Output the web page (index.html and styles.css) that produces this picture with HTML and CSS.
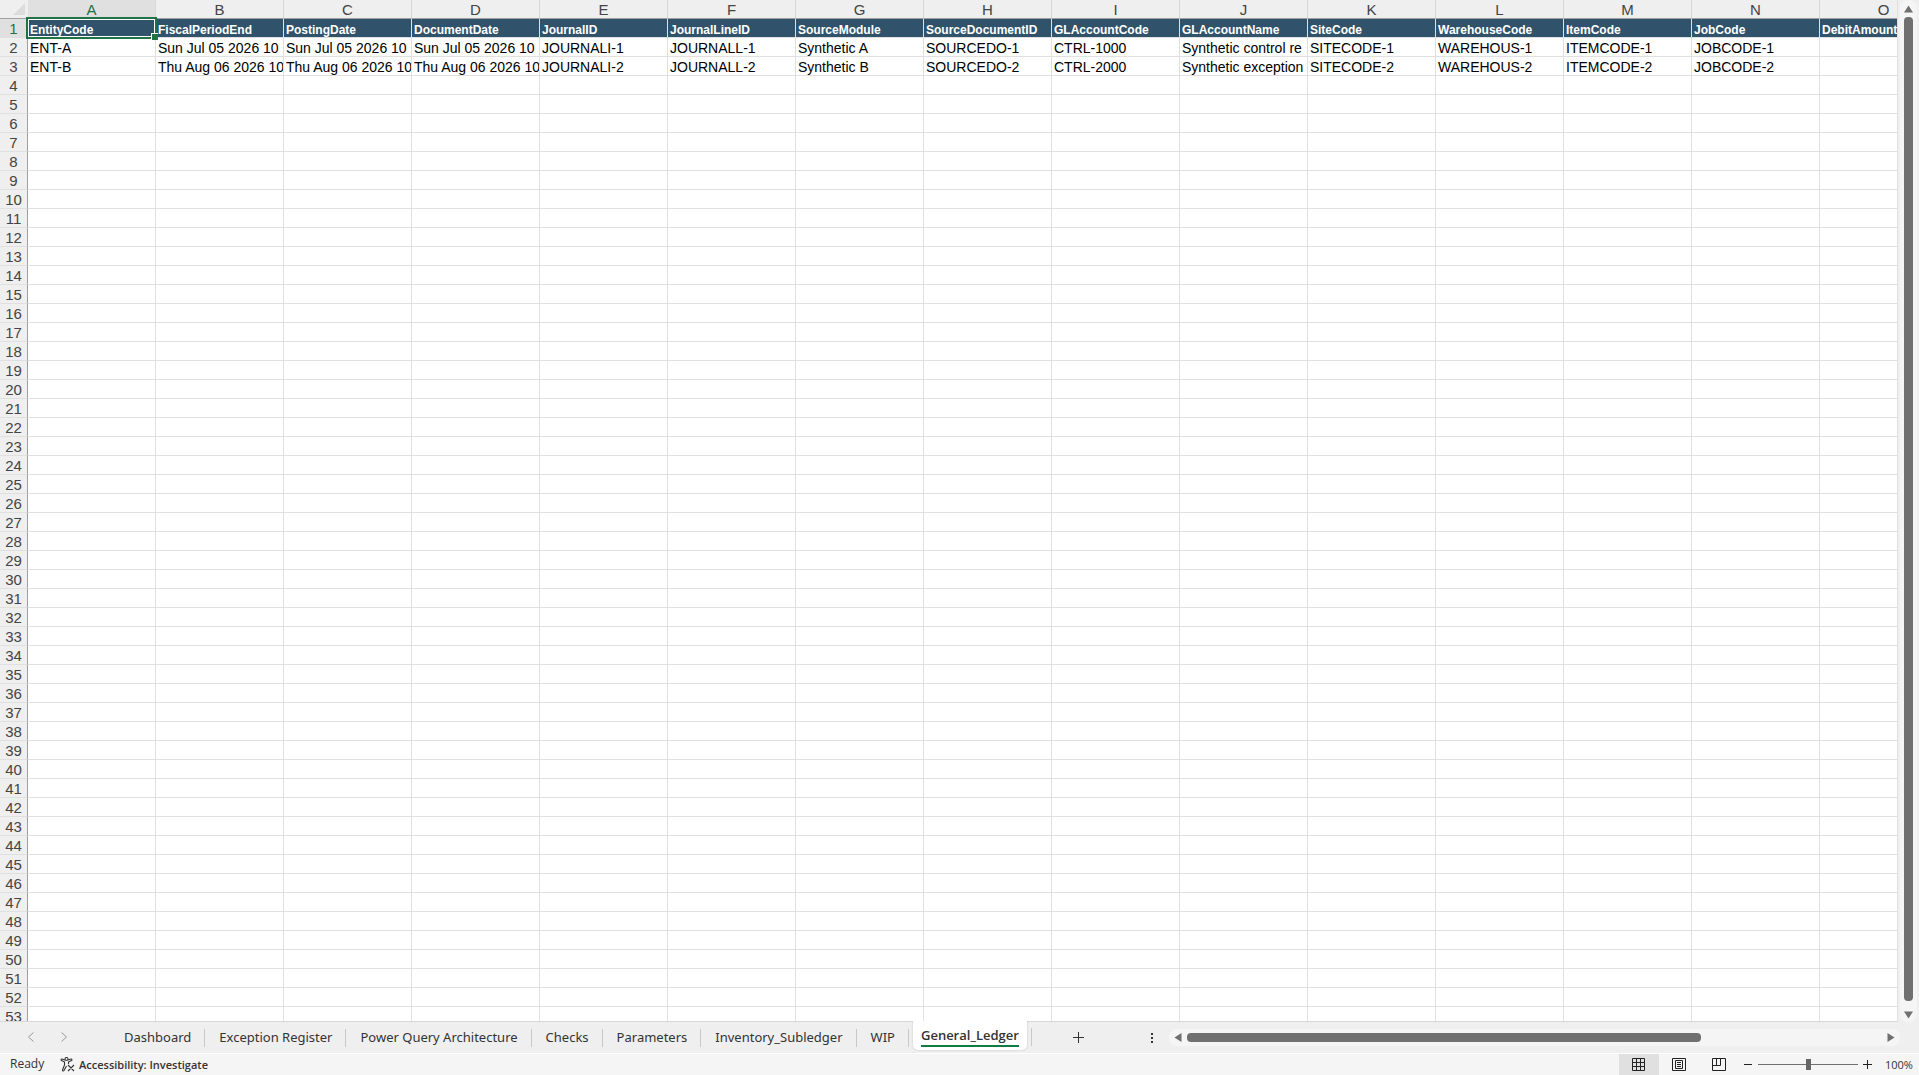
FILE: index.html
```html
<!DOCTYPE html>
<html lang="en">
<head>
  <meta charset="UTF-8">
  <meta name="viewport" content="width=device-width, initial-scale=1.0">
  <title>General_Ledger</title>
  <link rel="stylesheet" href="styles.css">
</head>
<body>
  <div class="workbook">
    <!-- Grid + vertical scrollbar -->
    <div class="main">
      <div class="sheet">
        <table class="grid">
          <thead>
            <tr id="letters"><th class="corner"><svg width="12" height="12" viewBox="0 0 12 12"><path d="M12 0v12H0z" fill="#dcdcdc"/></svg></th></tr>
          </thead>
          <tbody id="rows"></tbody>
        </table>
      </div>
      <div class="vscroll">
        <svg width="9" height="8" viewBox="0 0 9 8"><path d="M4.500 0.500L9 7.500H0z" fill="#707070"/></svg>
        <div class="vthumb"></div>
        <svg width="9" height="8" viewBox="0 0 9 8"><path d="M0 0.500h9L4.500 7.500z" fill="#707070"/></svg>
      </div>
    </div>

    <!-- Sheet tabs -->
    <div class="tabbar">
      <div class="tab-nav">
        <button aria-label="Previous sheet"><svg width="8" height="12" viewBox="0 0 8 12"><path d="M6.500 1.500L1.500 6l5 4.500"/></svg></button>
        <button aria-label="Next sheet"><svg width="8" height="12" viewBox="0 0 8 12"><path d="M1.500 1.500l5 4.500-5 4.500"/></svg></button>
      </div>
      <div class="tabs">
        <button class="tab">Dashboard</button>
        <button class="tab">Exception Register</button>
        <button class="tab">Power Query Architecture</button>
        <button class="tab">Checks</button>
        <button class="tab">Parameters</button>
        <button class="tab">Inventory_Subledger</button>
        <button class="tab">WIP</button>
        <button class="tab active"><span>General_Ledger</span></button>
      </div>
      <button class="add" aria-label="New sheet"><svg width="12" height="12" viewBox="0 0 12 12"><path d="M5.500 0v11M0 5.500h11" stroke="#333"/></svg></button>
      <div class="right">
        <svg class="dots" width="2" height="10" viewBox="0 0 2 10"><path d="M0 0h2v2H0zM0 4h2v2H0zM0 8h2v2H0z" fill="#333"/></svg>
        <div class="hscroll">
          <svg width="8" height="9" viewBox="0 0 8 9"><path d="M7.500 0v9L0.500 4.500z" fill="#707070"/></svg>
          <div class="htrack"><div class="hthumb"></div></div>
          <svg width="8" height="9" viewBox="0 0 8 9"><path d="M0.500 0v9l7-4.500z" fill="#707070"/></svg>
        </div>
      </div>
    </div>

    <!-- Status bar -->
    <div class="status">
      <span class="ready">Ready</span>
      <button class="access">
        <svg width="15" height="15" viewBox="0 0 15 15" fill="none" stroke="#333" stroke-width="1.100"><circle cx="6.500" cy="2" r="1.500"/><path d="M5 3L2 2C1 1.800 .7 3.200 1.500 3.500L4.500 5v3L2.500 13c-.2 1 1 1.300 1.500.5L6.500 9M8 3l3-1c1-.2 1.300 1.200.5 1.500L8.500 5v2M8 8l6 6M14 8l-6 6"/></svg>
        Accessibility: Investigate
      </button>
      <div class="views">
        <button class="view on" aria-label="Normal"><svg width="14" height="14" viewBox="0 0 14 14"><path d="M.5.5h12v12H.5zM4.500.5v12M8.500.5v12M.5 4.500h12M.5 8.500h12"/></svg></button>
        <button class="view" aria-label="Page Layout"><svg width="14" height="14" viewBox="0 0 14 14"><path d="M.5.5h13v12H.5zM3.500 2.500h7v8h-7zM5 4.500h4M5 6.500h4M5 8.500h4"/></svg></button>
        <button class="view" aria-label="Page Break Preview"><svg width="14" height="14" viewBox="0 0 14 14"><path d="M.5.5h13v12H.5zM.5 7.500h8v-7M4.500.5v7"/></svg></button>
      </div>
      <div class="zoom">
        <button aria-label="Zoom out"><svg width="9" height="9" viewBox="0 0 9 9"><path d="M0 4.500h8"/></svg></button>
        <input type="range" min="0" max="100" value="50" aria-label="Zoom">
        <button aria-label="Zoom in"><svg width="9" height="9" viewBox="0 0 9 9"><path d="M0 4.500h9M4.500 0v9"/></svg></button>
        <span class="percent">100%</span>
      </div>
    </div>
  </div>
  <script src="script.js"></script>
</body>
</html>
```

FILE: styles.css
```css
* {
  box-sizing: border-box;
}

body {
  margin: 0;
  background: #efefef;
  color: #333;
  font-family: "Open Sans", "Noto Sans", sans-serif;
}

button {
  margin: 0;
  padding: 0;
  border: none;
  background: none;
  color: inherit;
  font: inherit;
}

svg {
  display: block;
  flex: none;
}

.workbook {
  display: flex;
  flex-direction: column;
  height: 100vh;
  overflow: hidden;
}

.main {
  flex: 1;
  display: flex;
  min-height: 0;
}

/* Grid */
.sheet {
  flex: 1;
  min-width: 0;
  overflow: hidden;
  background: #fff;
  border-right: 1px solid #e0e0e0;
  border-bottom: 1px solid #d8d8d8;
}

.grid {
  width: 1948px;
  table-layout: fixed;
  border-collapse: separate;
  border-spacing: 0;
  font-family: "Liberation Sans", Arial, sans-serif;
  font-size: 14px;
  line-height: 16px;
}

.grid th,
.grid td {
  height: 19px;
  padding: 2px 0 0 2px;
  overflow: hidden;
  white-space: nowrap;
  text-align: left;
  font-weight: normal;
  border-right: 1px solid #e0e0e0;
  border-bottom: 1px solid #e0e0e0;
}

.grid td {
  color: #000;
}

.grid thead th {
  width: 128px;
  padding: 2px 0 0;
  text-align: center;
  font-size: 15px;
  color: #444;
  background: #efefef;
  border-right-color: #d8d8d8;
  border-bottom-color: #a0a0a0;
}

.grid thead .corner {
  width: 28px;
  padding: 0 0 0 13px;
  border-right-color: #efefef;
}

.grid tbody th {
  padding: 2px 0 0;
  text-align: center;
  font-size: 15px;
  color: #444;
  background: #efefef;
  border-right-color: #a0a0a0;
}

.grid thead .current,
.grid tbody .current {
  color: #217346;
  background: #e0e0e0;
}

.grid .field {
  padding-top: 4px;
  font-size: 12px;
  line-height: 14px;
  font-weight: bold;
  color: #fff;
  background: #30536b;
}

.grid .selected {
  position: relative;
  overflow: visible;
}

.selected::before {
  content: "";
  position: absolute;
  inset: -2px;
  border: 2px solid #217346;
  box-shadow: inset 0 0 0 1px #fff;
}

.selected::after {
  content: "";
  position: absolute;
  right: -3px;
  bottom: -3px;
  width: 6px;
  height: 6px;
  background: #217346;
  border: 1px solid #fff;
  border-width: 1px 0 0 1px;
}

/* Vertical scrollbar */
.vscroll {
  width: 17px;
  margin: 0 2px;
  padding: 5px 0 3px;
  display: flex;
  flex-direction: column;
  align-items: center;
  gap: 4px;
  background: #f5f5f5;
  border-radius: 8px;
}

.vthumb {
  flex: 1;
  width: 9px;
  margin-bottom: 6px;
  background: #707070;
  border-radius: 4px;
}

/* Sheet tabs */
.tabbar {
  display: flex;
  height: 32px;
  border-bottom: 1px solid #fff;
}

.tab-nav {
  display: flex;
  align-items: center;
  gap: 25px;
  width: 110px;
  padding: 0 0 2px 27px;
}

.tab-nav svg {
  fill: none;
  stroke: #999;
}

.tabs {
  display: flex;
  font-family: "Noto Sans", "Open Sans", sans-serif;
  font-size: 13px;
}

.tab {
  position: relative;
  padding: 0 14px 2px;
  white-space: nowrap;
}

.tab::after {
  content: "";
  position: absolute;
  top: 7px;
  right: 0;
  width: 1px;
  height: 18px;
  background: #c8c8c8;
}

.tab.active {
  height: 29px;
  margin: -1px 4px 0;
  padding: 0 8px;
  background: #fff;
  border-radius: 0 0 5px 5px;
  box-shadow: 0 0 2px #bbb;
  clip-path: inset(0 -8px -4px);
  font-family: "Open Sans", "Noto Sans", sans-serif;
  font-weight: 600;
}

.tab.active::after {
  right: -5px;
}

.tab.active span {
  display: block;
  height: 22px;
  line-height: 20px;
  border-bottom: 2px solid #107c41;
}

.add {
  margin-left: 42px;
}

.right {
  flex: none;
  display: flex;
  align-items: center;
  gap: 16px;
  width: 40%;
  margin-left: auto;
}

.hscroll {
  flex: 1;
  display: flex;
  align-items: center;
  gap: 5px;
  height: 17px;
  margin-right: 19px;
  padding: 0 5px;
  background: #f5f5f5;
  border-radius: 8px;
}

.htrack {
  flex: 1;
}

.hthumb {
  width: 74%;
  height: 9px;
  background: #707070;
  border-radius: 4px;
}

/* Status bar */
.status {
  display: flex;
  height: 21px;
  background: #f5f5f5;
  font-size: 12px;
  line-height: 20px;
}

.ready {
  width: 60px;
  padding-left: 10px;
}

.access {
  display: flex;
  align-items: center;
  gap: 4px;
  font-size: 11px;
  font-weight: 600;
}

.views {
  display: flex;
  margin-left: auto;
}

.view {
  display: flex;
  align-items: center;
  justify-content: center;
  width: 40px;
}

.view.on {
  background: #e0e0e0;
}

.view svg,
.zoom svg {
  fill: none;
  stroke: #222;
}

.zoom {
  display: flex;
  align-items: center;
  gap: 5px;
  padding-left: 5px;
}

.zoom input {
  appearance: none;
  width: 100px;
  height: 11px;
  margin: 0;
  background: linear-gradient(#707070, #707070) center / 100% 1px no-repeat;
}

.zoom input::-webkit-slider-thumb {
  appearance: none;
  width: 5px;
  height: 11px;
  background: #666;
}

.percent {
  width: 42px;
  padding-left: 8px;
  font-size: 11px;
}
```

FILE: script.js
```js
const fields = ["EntityCode", "FiscalPeriodEnd", "PostingDate", "DocumentDate", "JournalID", "JournalLineID", "SourceModule", "SourceDocumentID", "GLAccountCode", "GLAccountName", "SiteCode", "WarehouseCode", "ItemCode", "JobCode", "DebitAmount"];

const records = [
  ["ENT-A", "Sun Jul 05 2026 10", "Sun Jul 05 2026 10", "Sun Jul 05 2026 10", "JOURNALI-1", "JOURNALL-1", "Synthetic A", "SOURCEDO-1", "CTRL-1000", "Synthetic control re", "SITECODE-1", "WAREHOUS-1", "ITEMCODE-1", "JOBCODE-1"],
  ["ENT-B", "Thu Aug 06 2026 10", "Thu Aug 06 2026 10", "Thu Aug 06 2026 10", "JOURNALI-2", "JOURNALL-2", "Synthetic B", "SOURCEDO-2", "CTRL-2000", "Synthetic exception", "SITECODE-2", "WAREHOUS-2", "ITEMCODE-2", "JOBCODE-2"]
];

const rowCount = 53;

// Add one cell to a row
function addCell(row, tag, text, className) {
  const cell = document.createElement(tag);
  cell.textContent = text || "";
  if (className) cell.className = className;
  row.appendChild(cell);
}

// Column letters
const letters = document.getElementById("letters");
fields.forEach((field, i) => {
  addCell(letters, "th", String.fromCharCode(65 + i), i === 0 ? "current" : "");
});

// Numbered rows, the first one holds the field names
const body = document.getElementById("rows");
for (let n = 1; n <= rowCount; n++) {
  const row = document.createElement("tr");
  const values = n === 1 ? fields : records[n - 2] || [];
  addCell(row, "th", String(n), n === 1 ? "current" : "");
  fields.forEach((field, i) => {
    const className = n === 1 ? (i === 0 ? "field selected" : "field") : "";
    addCell(row, "td", values[i], className);
  });
  body.appendChild(row);
}
```
